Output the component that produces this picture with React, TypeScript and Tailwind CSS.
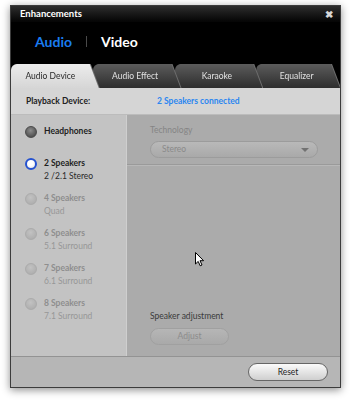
import React from "react";

const FONT = "font-['Lato','Liberation_Sans',sans-serif]";

type Speaker = { title: string; sub?: string; state: "on" | "selected" | "off" };

const SPEAKERS: Speaker[] = [
  { title: "Headphones", state: "on" },
  { title: "2 Speakers", sub: "2 /2.1 Stereo", state: "selected" },
  { title: "4 Speakers", sub: "Quad", state: "off" },
  { title: "6 Speakers", sub: "5.1 Surround", state: "off" },
  { title: "7 Speakers", sub: "6.1 Surround", state: "off" },
  { title: "8 Speakers", sub: "7.1 Surround", state: "off" },
];

function Radio({ state }: { state: Speaker["state"] }) {
  if (state === "selected") {
    return (
      <span className="box-border h-[12px] w-[12px] shrink-0 rounded-full border-[2px] border-[#2552d0] bg-[radial-gradient(circle_at_45%_40%,#ffffff_40%,#d8d8d8)]" />
    );
  }
  if (state === "on") {
    return (
      <span className="box-border h-[12px] w-[12px] shrink-0 rounded-full border border-[#4a4a4a] bg-[radial-gradient(circle_at_45%_35%,#8c8c8c,#3c3c3c)]" />
    );
  }
  return (
    <span className="box-border h-[12px] w-[12px] shrink-0 rounded-full border border-[#ababab] bg-[radial-gradient(circle_at_45%_35%,#c2c2c2,#a9a9a9)]" />
  );
}

function SpeakerItem({ item }: { item: Speaker }) {
  const off = item.state === "off";
  return (
    <div className={item.state === "on" ? "mb-[10px]" : ""}>
      <div className="flex h-[13px] items-center gap-[7px]">
        <Radio state={item.state} />
        <span className={`text-[8.5px] font-bold leading-[13px] ${off ? "text-[#8e8e8e]" : "text-[#1e1e1e]"}`}>
          {item.title}
        </span>
      </div>
      {item.sub && (
        <div className={`pl-[19px] text-[8.5px] leading-[13px] ${off ? "text-[#979797]" : "text-[#2a2a2a]"}`}>
          {item.sub}
        </div>
      )}
    </div>
  );
}

const TABS = ["Audio Device", "Audio Effect", "Karaoke", "Equalizer"];
const TAB_Z = ["z-40", "z-30", "z-20", "z-10"];

function Tabs() {
  return (
    <div className="flex h-[24px] bg-black">
      {TABS.map((t, i) => {
        const active = i === 0;
        return (
          <div
            key={t}
            className={`relative ${TAB_Z[i]} ${i > 0 ? "-ml-[6px]" : ""} ${i === 3 ? "w-[84px]" : "w-[88px]"} drop-shadow-[1px_0_0_#6e6e6e]`}
          >
            <div
              className={`flex h-[24px] items-center justify-center rounded-tl-[6px] pr-[9px] text-[8.5px] [clip-path:polygon(0_0,calc(100%-9px)_0,100%_100%,0_100%)] ${
                active
                  ? "bg-gradient-to-b from-[#ececec] to-[#d6d6d6] text-[#2a2a2a]"
                  : "bg-gradient-to-b from-[#5c5c5c] to-[#2e2e2e] pl-[6px] text-[#e2e2e2]"
              }`}
            >
              {t}
            </div>
          </div>
        );
      })}
    </div>
  );
}

function Cursor() {
  return (
    <svg className="absolute left-[195px] top-[252px]" width="10" height="15" viewBox="0 0 10 15">
      <path
        d="M0.5 0.5 L0.5 12 L3.2 9.4 L5.2 13.8 L7 13 L5 8.7 L8.6 8.7 Z"
        fill="#ffffff"
        stroke="#000000"
        strokeWidth="1"
        strokeLinejoin="round"
      />
    </svg>
  );
}

export default function App() {
  return (
    <div className={`relative h-[402px] w-[350px] bg-white pl-[10px] pt-[5px] ${FONT}`}>
      <div className="box-border flex h-[383px] w-[331px] flex-col overflow-hidden border border-[#3c3c3c] shadow-[0_2px_8px_rgba(0,0,0,0.45)]">
        {/* title bar */}
        <div className="flex h-[16px] shrink-0 items-center justify-between bg-gradient-to-b from-[#2e2e2e] to-[#050505] pl-[9px] pr-[7px]">
          <span className="text-[9.5px] font-bold text-white">Enhancements</span>
          <span className="text-[10px] font-bold leading-none text-[#d8d8d8]">✖</span>
        </div>

        {/* Audio | Video */}
        <div className="flex h-[42px] shrink-0 items-center bg-black pb-[4px] pl-[24px]">
          <span className="text-[14px] font-bold text-[#1a7cf0]">Audio</span>
          <span className="mx-[14px] h-[11px] w-px bg-[#4a4a4a]" />
          <span className="text-[14px] font-bold text-white">Video</span>
        </div>

        <Tabs />

        {/* playback row */}
        <div className="flex h-[27px] shrink-0 items-center border-b border-[#bcbcbc] bg-[#d5d5d5] pl-[15px]">
          <span className="w-[131px] text-[8.5px] font-bold text-[#222]">Playback Device:</span>
          <span className="text-[8.5px] font-bold text-[#2a86f0]">2 Speakers connected</span>
        </div>

        {/* main */}
        <div className="flex min-h-0 flex-1">
          <div className="flex w-[116px] shrink-0 flex-col gap-[9px] border-r border-[#cfcfcf] bg-[#c3c3c3] pl-[14px] pt-[10px]">
            {SPEAKERS.map((s) => (
              <SpeakerItem key={s.title} item={s} />
            ))}
          </div>
          <div className="flex flex-1 flex-col bg-[#ababab]">
            <div className="h-[50px] shrink-0 border-b border-[#9a9a9a] pl-[23px] pt-[9px] shadow-[0_1px_0_#b8b8b8]">
              <div className="text-[8.5px] leading-[12px] text-[#858585]">Technology</div>
              <div className="mt-[5px] flex h-[17px] w-[168px] items-center justify-between rounded-full border border-[#9c9c9c] bg-gradient-to-b from-[#b9b9b9] to-[#a9a9a9] pl-[11px] pr-[8px]">
                <span className="text-[8.5px] text-[#8a8a8a]">Stereo</span>
                <span className="h-0 w-0 border-x-[4px] border-t-[4px] border-x-transparent border-t-[#727272]" />
              </div>
            </div>
            <div className="flex flex-1 flex-col justify-end pb-[11px] pl-[23px]">
              <div className="text-[8.5px] leading-[12px] text-[#3a3a3a]">Speaker adjustment</div>
              <div className="mt-[6px] flex h-[17px] w-[79px] items-center justify-center rounded-full border border-[#a0a0a0] bg-gradient-to-b from-[#b6b6b6] to-[#a9a9a9] text-[8.5px] text-[#8c8c8c]">
                Adjust
              </div>
            </div>
          </div>
        </div>

        {/* bottom bar */}
        <div className="flex h-[31px] shrink-0 items-center justify-end border-t border-[#939393] bg-[#b6b6b6] pr-[12px]">
          <div className="flex h-[18px] w-[80px] items-center justify-center rounded-full border border-[#666] bg-gradient-to-b from-[#fbfbfb] to-[#cfcfcf] text-[8.5px] text-[#1e1e1e]">
            Reset
          </div>
        </div>
      </div>
      <Cursor />
    </div>
  );
}
